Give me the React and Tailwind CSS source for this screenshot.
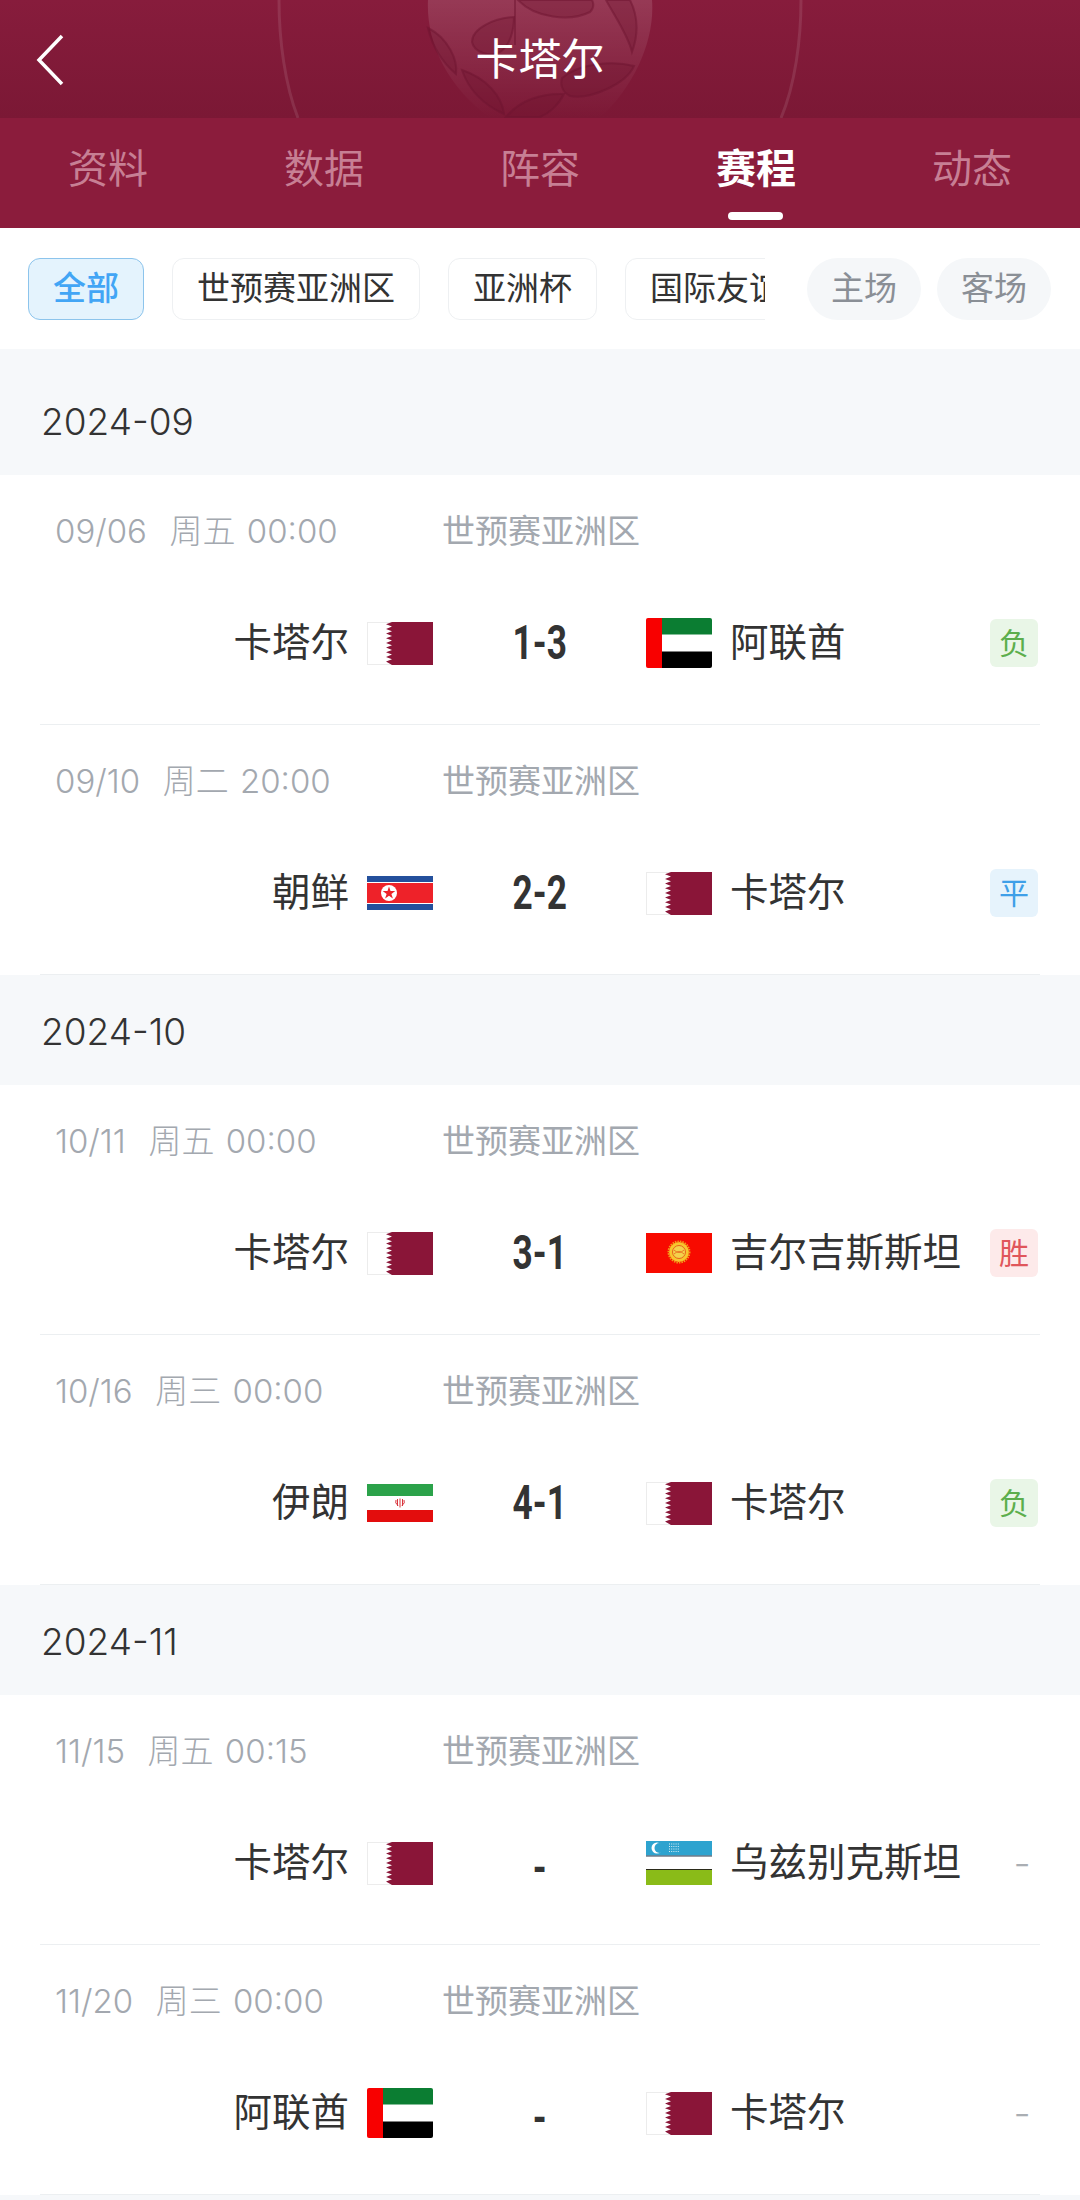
const font = { fontFamily: '"Inter", "Noto Sans CJK SC", sans-serif' };

const QatarFlag = () => (
  <svg width="66" height="43" viewBox="0 0 66 43">
    <rect x="0.5" y="0.5" width="30" height="42" fill="#fff" stroke="#ececec" />
    <path
      d="M66 0H25L19 2.3 25 4.6 19 7 25 9.3 19 11.6 25 14 19 16.3 25 18.6 19 21 25 23.3 19 25.6 25 28 19 30.3 25 32.6 19 35 25 37.3 19 39.6 25 43H66Z"
      fill="#8a1538"
    />
  </svg>
);

const UaeFlag = () => (
  <svg width="66" height="50" viewBox="0 0 66 50">
    <rect width="66" height="50" rx="2" fill="#fff" />
    <path d="M16 0H64a2 2 0 0 1 2 2V16.5H16Z" fill="#0b7d32" />
    <path d="M16 33.500H66V48a2 2 0 0 1-2 2H16Z" fill="#000" />
    <path d="M2 0H16V50H2a2 2 0 0 1-2-2V2a2 2 0 0 1 2-2Z" fill="#f80000" />
  </svg>
);

const KoreaFlag = () => (
  <svg width="66" height="34" viewBox="0 0 66 34">
    <rect width="66" height="34" fill="#24509c" />
    <rect y="6" width="66" height="22" fill="#fff" />
    <rect y="7" width="66" height="20" fill="#ee2229" />
    <circle cx="22" cy="17" r="8" fill="#fff" />
    <path
      d="M22 10.500l1.500 4.600h4.800l-3.900 2.800 1.500 4.600-3.900-2.800-3.900 2.800 1.500-4.600-3.900-2.800h4.800Z"
      fill="#ee2229"
    />
  </svg>
);

const KyrgyzFlag = () => (
  <svg width="66" height="40" viewBox="0 0 66 40">
    <rect width="66" height="40" fill="#f80a00" />
    <circle cx="33" cy="19" r="10" fill="#f7c52e" />
    <circle cx="33" cy="19" r="10.500" fill="none" stroke="#f29a16" strokeWidth="2" strokeDasharray="1.500 1" />
    <circle cx="33" cy="19" r="6.500" fill="#f3d24c" stroke="#e8621a" strokeWidth="1" />
    <path d="M28 17q5 5 10 0M28 21q5-5 10 0" fill="none" stroke="#e8621a" strokeWidth="0.800" />
  </svg>
);

const IranFlag = () => (
  <svg width="66" height="38" viewBox="0 0 66 38">
    <rect width="66" height="38" fill="#fff" />
    <rect width="66" height="12" fill="#2ba24a" />
    <rect y="26" width="66" height="12" fill="#e30d0d" />
    <path d="M30.500 15v7M35.500 15v7M33 14.500v9" stroke="#d9343b" strokeWidth="1" fill="none" />
    <path d="M29 16q-1.500 3 2 5.500M37 16q1.500 3-2 5.500" stroke="#d9343b" strokeWidth="1" fill="none" />
  </svg>
);

const UzbekFlag = () => (
  <svg width="66" height="44" viewBox="0 0 66 44">
    <rect width="66" height="44" fill="#fff" />
    <rect width="66" height="14.500" fill="#2ea3cf" />
    <rect y="14.500" width="66" height="1" fill="#2c3c50" />
    <rect y="28" width="66" height="1" fill="#2b2b1a" />
    <rect y="29" width="66" height="15" fill="#8abb18" />
    <circle cx="11" cy="7" r="5.500" fill="#fff" />
    <circle cx="13.500" cy="7" r="5" fill="#2ea3cf" />
    <path d="M23 3h11M23 5.500h11M23 8h11M23 10.500h11" stroke="#d8eef7" strokeWidth="1" strokeDasharray="1 1.200" />
  </svg>
);

const flags = {
  qatar: QatarFlag,
  uae: UaeFlag,
  korea: KoreaFlag,
  kyrgyz: KyrgyzFlag,
  iran: IranFlag,
  uzbek: UzbekFlag,
};

const Flag = ({ code }) => {
  const Icon = flags[code];
  return (
    <div className="w-[66px] h-[50px] flex items-center justify-center shrink-0">
      <Icon />
    </div>
  );
};

const Result = ({ value }) => {
  if (value === "负")
    return (
      <div className="w-[48px] h-[48px] rounded-md bg-[#e9f6e7] text-[#5cae4c] text-[30px] flex items-center justify-center">
        负
      </div>
    );
  if (value === "平")
    return (
      <div className="w-[48px] h-[48px] rounded-md bg-[#e6f3fc] text-[#3f9fe8] text-[30px] flex items-center justify-center">
        平
      </div>
    );
  if (value === "胜")
    return (
      <div className="w-[48px] h-[48px] rounded-md bg-[#fdeaea] text-[#e0565b] text-[30px] flex items-center justify-center">
        胜
      </div>
    );
  return <div className="w-[48px] h-[48px] pl-[16px] text-[#aaaeb3] text-[38px] font-light flex items-center justify-center">-</div>;
};

const MatchRow = ({ date, home, homeFlag, score, away, awayFlag, result }) => (
  <div className="h-[250px] mx-[40px] border-b border-[#eceff1] flex flex-col">
    <div className="h-[112px] pt-[2px] flex items-center text-[33px] text-[#a3a8af]">
      <div className="w-[402px] pl-[15px] whitespace-pre text-[33px] font-light [word-spacing:2px]">{date}</div>
      <div>世预赛亚洲区</div>
    </div>
    <div className="h-[110px] pt-[2px] flex items-center">
      <div className="w-[309px] text-right text-[38.500px] text-[#333]">{home}</div>
      <div className="ml-[18px]">
        <Flag code={homeFlag} />
      </div>
      <div
        className={
          score === "-"
            ? "w-[213px] pt-[10px] text-center text-[49px] font-bold text-[#333]"
            : "w-[213px] text-center text-[49px] font-bold text-[#333]"
        }
        style={{ fontFamily: '"Roboto", sans-serif' }}
      >
        <span className="inline-block scale-x-[0.72]">{score}</span>
      </div>
      <Flag code={awayFlag} />
      <div className="ml-[18px] flex-1 text-[38.500px] text-[#333]">{away}</div>
      <div className="mr-[2px]">
        <Result value={result} />
      </div>
    </div>
  </div>
);

const Month = ({ label, first }) => (
  <div
    className={
      first
        ? "bg-[#f6f8fa] h-[126px] pt-[20px] pl-[41px] flex items-center text-[37px] font-light text-[#333]"
        : "bg-[#f6f8fa] h-[110px] pt-[4px] pl-[41px] flex items-center text-[37px] font-light text-[#333]"
    }
  >
    {label}
  </div>
);

// 队徽水印
const Crest = () => (
  <svg className="absolute left-0 top-0" width="1080" height="118" viewBox="0 0 1080 118">
    <defs>
      <linearGradient id="shield" x1="0" y1="0" x2="0" y2="1">
        <stop offset="0" stopColor="#fff" stopOpacity="0.13" />
        <stop offset="1" stopColor="#fff" stopOpacity="0" />
      </linearGradient>
    </defs>
    <path
      d="M279 0C279 40 285 85 298 118M801 0C801 40 795 85 781 118"
      fill="none"
      stroke="#fff"
      strokeOpacity="0.1"
      strokeWidth="3"
    />
    <path d="M428 0C426 40 445 85 490 118H600C635 85 655 40 652 0Z" fill="url(#shield)" />
    <g fill="#6d1430" fillOpacity="0.3" stroke="#6d1430" strokeOpacity="0.5" strokeWidth="2">
      <path d="M514 17C495 18 472 28 472 42C474 52 490 58 500 52C510 46 514 30 514 17Z" />
      <path d="M518 0C535 18 570 22 590 12C594 8 594 4 592 0Z" />
      <path d="M606 0C614 15 628 35 632 52C640 30 636 12 630 0Z" />
      <path d="M428 28C432 45 442 62 456 74C458 60 448 38 428 28Z" />
      <path d="M462 70C468 88 482 104 504 114C502 96 486 78 462 70Z" />
      <path d="M506 117C520 100 542 93 564 94C558 106 548 114 540 117Z" />
      <path d="M562 78C578 64 612 60 634 66C626 84 590 100 570 96C562 92 560 84 562 78Z" />
    </g>
    <path d="M515 0V45" stroke="#6d1430" strokeOpacity="0.5" strokeWidth="2" fill="none" />
  </svg>
);

const tabs = ["资料", "数据", "阵容", "赛程", "动态"];

export default function App() {
  return (
    <div className="w-[1080px] h-[2200px] overflow-hidden bg-white" style={font}>
      {/* 顶部 */}
      <div className="relative h-[118px] bg-gradient-to-b from-[#871c3c] to-[#7b1835] overflow-hidden flex items-center justify-center">
        <Crest />
        <svg className="absolute left-[34px] top-[34px]" width="32" height="52" viewBox="0 0 32 52">
          <path d="M28 2L5 26L28 50" fill="none" stroke="#fff" strokeWidth="3.500" />
        </svg>
        <div className="relative text-[43px] text-white">卡塔尔</div>
      </div>

      {/* 标签 */}
      <div className="h-[110px] bg-[#8b1c3c] flex">
        {tabs.map((t) =>
          t === "赛程" ? (
            <div key={t} className="relative w-[216px] flex items-center justify-center text-[40px] font-bold text-white pb-[8px]">
              {t}
              <div className="absolute bottom-[8px] left-[80px] w-[55px] h-[8px] rounded-full bg-white" />
            </div>
          ) : (
            <div key={t} className="w-[216px] flex items-center justify-center text-[40px] text-[#c77f94] pb-[8px]">
              {t}
            </div>
          )
        )}
      </div>

      {/* 筛选 */}
      <div className="h-[121px] flex items-start pt-[30px] pl-[28px] text-[33px]">
        <div className="w-[737px] flex gap-[28px] overflow-hidden shrink-0">
          <div className="h-[62px] px-[24px] flex items-center shrink-0 rounded-[12px] border border-[#8cc4ec] bg-[#e4f3fd] text-[#42a5f5] font-medium">
            全部
          </div>
          <div className="h-[62px] px-[24px] flex items-center shrink-0 rounded-[12px] border border-[#eef0f2] text-[#333]">
            世预赛亚洲区
          </div>
          <div className="h-[62px] px-[24px] flex items-center shrink-0 rounded-[12px] border border-[#eef0f2] text-[#333]">
            亚洲杯
          </div>
          <div className="h-[62px] px-[24px] flex items-center shrink-0 rounded-[12px] border border-[#eef0f2] text-[#333]">
            国际友谊赛
          </div>
        </div>
        <div className="ml-[42px] w-[114px] h-[62px] rounded-full bg-[#f5f7f9] text-[#8a8f96] flex items-center justify-center shrink-0">主场</div>
        <div className="ml-[16px] w-[114px] h-[62px] rounded-full bg-[#f5f7f9] text-[#8a8f96] flex items-center justify-center shrink-0">客场</div>
      </div>

      <Month label="2024-09" first />
      <MatchRow date="09/06  周五 00:00" home="卡塔尔" homeFlag="qatar" score="1-3" away="阿联酋" awayFlag="uae" result="负" />
      <MatchRow date="09/10  周二 20:00" home="朝鲜" homeFlag="korea" score="2-2" away="卡塔尔" awayFlag="qatar" result="平" />
      <Month label="2024-10" />
      <MatchRow date="10/11  周五 00:00" home="卡塔尔" homeFlag="qatar" score="3-1" away="吉尔吉斯斯坦" awayFlag="kyrgyz" result="胜" />
      <MatchRow date="10/16  周三 00:00" home="伊朗" homeFlag="iran" score="4-1" away="卡塔尔" awayFlag="qatar" result="负" />
      <Month label="2024-11" />
      <MatchRow date="11/15  周五 00:15" home="卡塔尔" homeFlag="qatar" score="-" away="乌兹别克斯坦" awayFlag="uzbek" result="-" />
      <MatchRow date="11/20  周三 00:00" home="阿联酋" homeFlag="uae" score="-" away="卡塔尔" awayFlag="qatar" result="-" />
      <div className="h-[10px] bg-[#f6f8fa]" />
    </div>
  );
}
